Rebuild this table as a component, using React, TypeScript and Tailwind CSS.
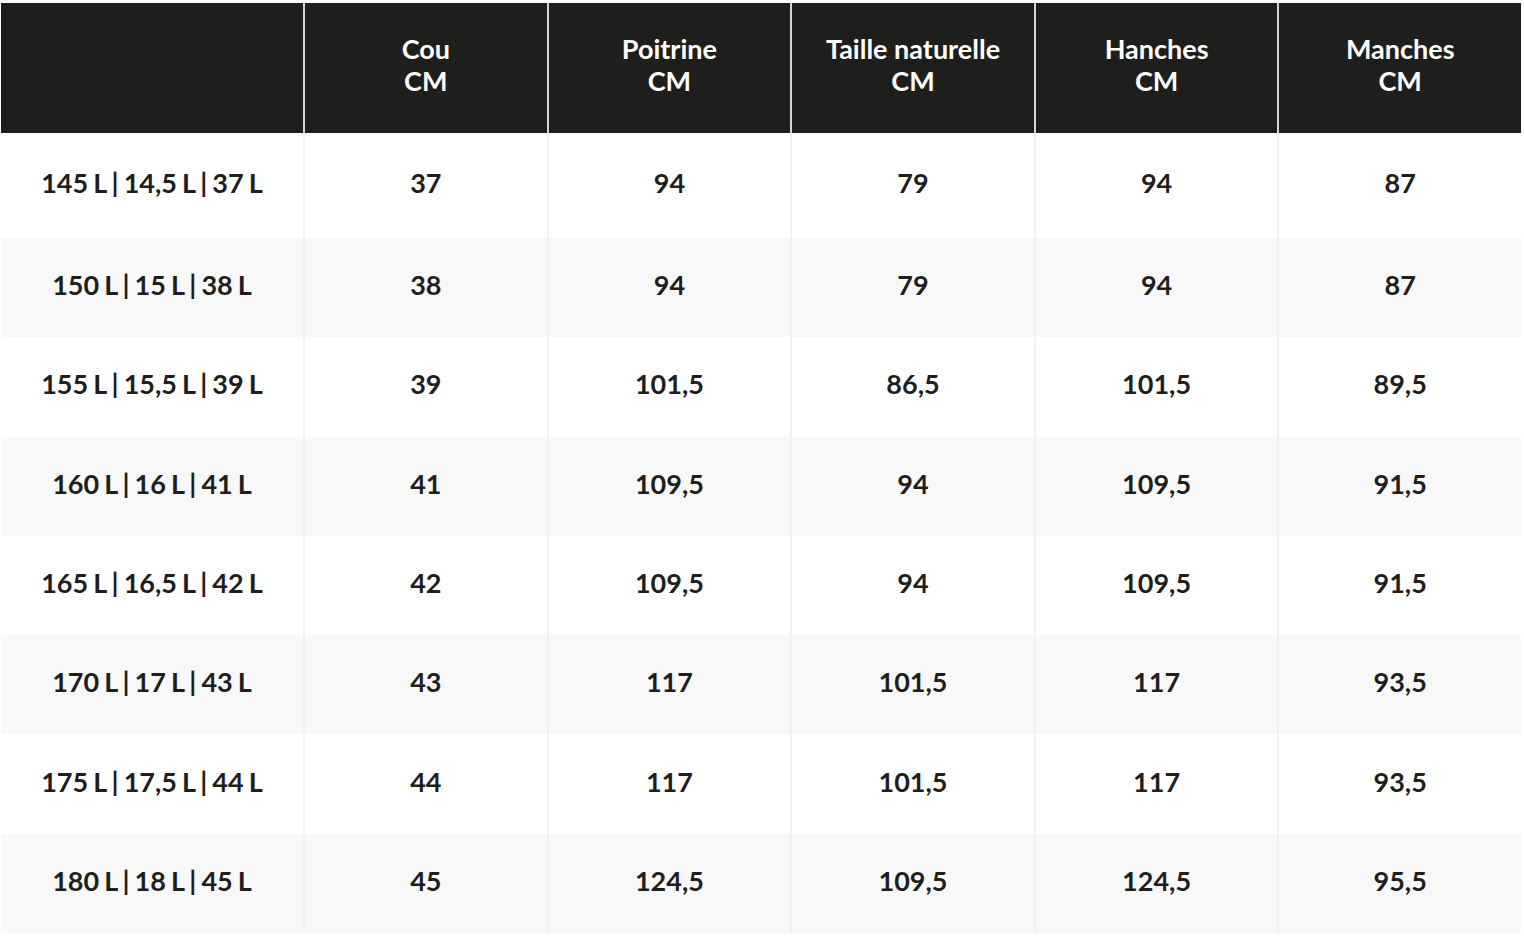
import React from "react"

const headers = ["Cou", "Poitrine", "Taille naturelle", "Hanches", "Manches"]

const rows: string[][] = [
  ["145 L | 14,5 L | 37 L", "37", "94", "79", "94", "87"],
  ["150 L | 15 L | 38 L", "38", "94", "79", "94", "87"],
  ["155 L | 15,5 L | 39 L", "39", "101,5", "86,5", "101,5", "89,5"],
  ["160 L | 16 L | 41 L", "41", "109,5", "94", "109,5", "91,5"],
  ["165 L | 16,5 L | 42 L", "42", "109,5", "94", "109,5", "91,5"],
  ["170 L | 17 L | 43 L", "43", "117", "101,5", "117", "93,5"],
  ["175 L | 17,5 L | 44 L", "44", "117", "101,5", "117", "93,5"],
  ["180 L | 18 L | 45 L", "45", "124,5", "109,5", "124,5", "95,5"],
]

export default function App() {
  return (
    <div className="min-h-[952px] bg-white pt-[3px] pl-[1px] font-['Lato','Liberation_Sans',sans-serif] font-bold">
      <div className="w-[1520px]">
        {/* Header */}
        <div className="grid grid-cols-[302px_repeat(5,1fr)] h-[130px] bg-[#1e1e1d] text-white text-[27px] leading-[32px]">
          <div />
          {headers.map((h) => (
            <div
              key={h}
              className="flex flex-col items-center justify-center border-l-2 border-[#d4d4d4] pb-[6px]">
              <span>{h}</span>
              <span>CM</span>
            </div>
          ))}
        </div>

        {/* Body */}
        {rows.map((row, i) => (
          <div
            key={i}
            className={
              "grid grid-cols-[302px_repeat(5,1fr)] text-[27px] leading-[32px] text-[#1e1e1d] " +
              (i === 0 ? "h-[105px] bg-white" : i % 2 === 1 ? "h-[99.3px] bg-[#f8f8f8]" : "h-[99.3px] bg-white")
            }>
            {row.map((cell, j) => (
              <div
                key={j}
                className={
                  "flex items-center justify-center pb-[5px] " +
                  (j > 0 ? "border-l-2 border-[#f1f1f1]" : "[word-spacing:-1.5px]")
                }>
                {cell}
              </div>
            ))}
          </div>
        ))}
      </div>
    </div>
  )
}
